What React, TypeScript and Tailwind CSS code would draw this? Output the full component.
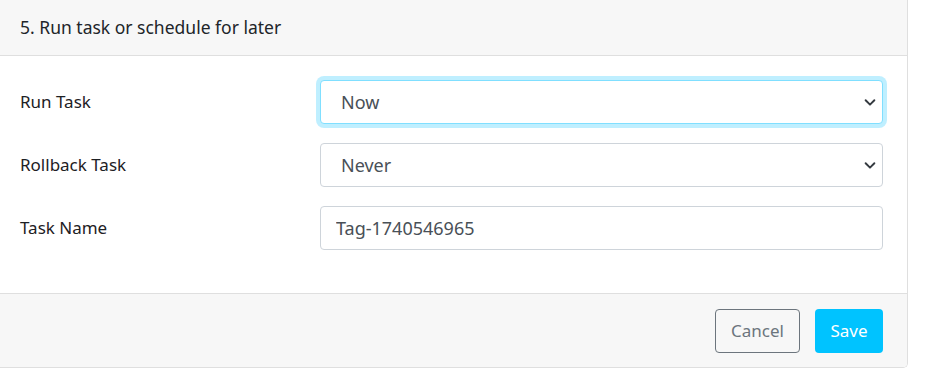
import { useState } from "react";

const font = { fontFamily: '"Noto Sans", "Open Sans", Arial, sans-serif' };

function Chevron() {
  return (
    <svg
      viewBox="0 0 16 16"
      className="pointer-events-none absolute right-[6px] top-1/2 h-[14px] w-[14px] -translate-y-1/2"
      fill="none"
      stroke="#343a40"
      strokeWidth="2.2"
      strokeLinecap="round"
      strokeLinejoin="round"
    >
      <path d="M3 6l5 5 5-5" />
    </svg>
  );
}

export default function App() {
  const [runTask, setRunTask] = useState("Now");
  const [rollback, setRollback] = useState("Never");
  const [taskName, setTaskName] = useState("Tag-1740546965");

  return (
    <div className="h-[376px] w-[925px] bg-white" style={font}>
      <div className="w-[908px] overflow-hidden rounded-br-[5px] border-r border-b border-[#dfdfdf]">
        {/* Header */}
        <div className="flex h-[56px] items-center border-b border-[#dfdfdf] bg-[#f7f7f7] px-[20px]">
          <h5 className="text-[17.5px] text-[#212529]">5. Run task or schedule for later</h5>
        </div>

        {/* Body */}
        <div className="flex flex-col gap-[19px] px-[20px] pt-[24px] pb-[43px]">
          <div className="flex items-center">
            <label className="w-[300px] text-[17px] text-[#1d2024]">Run Task</label>
            <div className="relative w-[563px]">
              <select
                value={runTask}
                onChange={(e) => setRunTask(e.target.value)}
                className="h-[44px] w-full appearance-none rounded-[4px] border border-[#80dfff] bg-white pl-[20px] text-[18px] text-[#495057] shadow-[0_0_0_4px_rgba(0,191,255,0.25)] outline-none"
              >
                <option>Now</option>
                <option>Later</option>
              </select>
              <Chevron />
            </div>
          </div>

          <div className="flex items-center">
            <label className="w-[300px] text-[17px] text-[#1d2024]">Rollback Task</label>
            <div className="relative w-[563px]">
              <select
                value={rollback}
                onChange={(e) => setRollback(e.target.value)}
                className="h-[44px] w-full appearance-none rounded-[4px] border border-[#ced4da] bg-white pl-[20px] text-[18px] text-[#495057] outline-none"
              >
                <option>Never</option>
                <option>Later</option>
              </select>
              <Chevron />
            </div>
          </div>

          <div className="flex items-center">
            <label className="w-[300px] text-[17px] text-[#1d2024]">Task Name</label>
            <input
              value={taskName}
              onChange={(e) => setTaskName(e.target.value)}
              className="h-[44px] w-[563px] rounded-[4px] border border-[#ced4da] bg-white px-[15px] text-[18px] text-[#495057] outline-none"
            />
          </div>
        </div>

        {/* Footer */}
        <div className="flex h-[74px] items-center justify-end gap-[15px] border-t border-[#dfdfdf] bg-[#f7f7f7] pr-[24px]">
          <button className="h-[44px] w-[85px] rounded-[4px] border border-[#6c757d] text-[17px] text-[#6c757d]">
            Cancel
          </button>
          <button className="h-[44px] w-[68px] rounded-[4px] bg-[#00c3ff] text-[17px] text-white">
            Save
          </button>
        </div>
      </div>
    </div>
  );
}
